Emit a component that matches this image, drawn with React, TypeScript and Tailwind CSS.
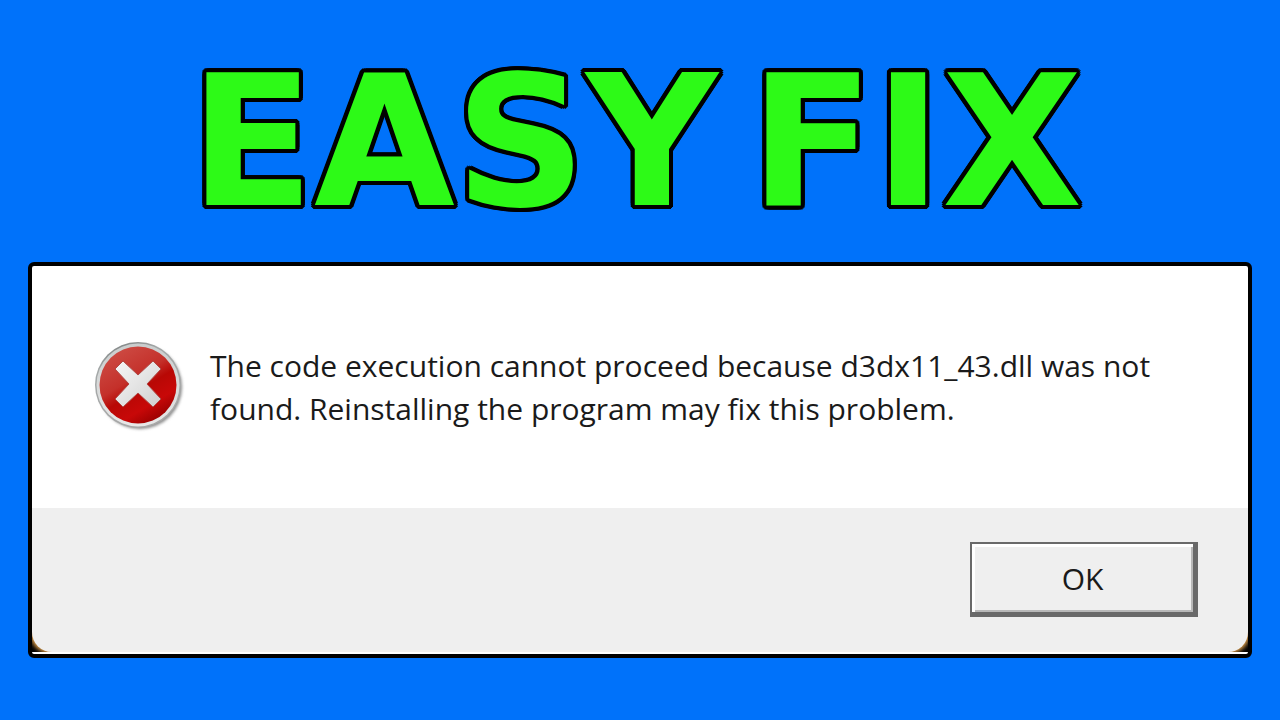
function ErrorIcon() {
  return (
    <svg viewBox="0 0 92 92" className="h-[92px] w-[92px] shrink-0" role="img" aria-label="Error">
      <defs>
        <linearGradient id="rim" x1="0" y1="0" x2="0.4" y2="1">
          <stop offset="0" stopColor="#6f7373" />
          <stop offset="0.3" stopColor="#a4a8a8" />
          <stop offset="1" stopColor="#a8a8a8" />
        </linearGradient>
        <linearGradient id="ring" x1="0" y1="0" x2="0" y2="1">
          <stop offset="0" stopColor="#c9cdcd" />
          <stop offset="1" stopColor="#e8e8e8" />
        </linearGradient>
        <linearGradient id="face" x1="0.1" y1="0" x2="0.7" y2="1">
          <stop offset="0" stopColor="#cf5149" />
          <stop offset="0.45" stopColor="#c4302a" />
          <stop offset="0.6" stopColor="#b80805" />
          <stop offset="0.8" stopColor="#c80808" />
          <stop offset="1" stopColor="#970000" />
        </linearGradient>
        <linearGradient id="cross" x1="0" y1="0" x2="1" y2="1">
          <stop offset="0" stopColor="#f6f6f6" />
          <stop offset="0.5" stopColor="#e4e4e4" />
          <stop offset="1" stopColor="#cfcfcf" />
        </linearGradient>
        <filter id="soft" x="-20%" y="-20%" width="140%" height="140%">
          <feGaussianBlur stdDeviation="1.6" />
        </filter>
      </defs>
      <circle cx="46" cy="46" r="42" fill="#8a8a8a" filter="url(#soft)" />
      <circle cx="44" cy="44" r="43" fill="url(#rim)" />
      <circle cx="44" cy="44" r="41.5" fill="url(#ring)" />
      <circle cx="44" cy="44" r="38.5" fill="url(#face)" />
      <path
        d="M29 20 L44 34 L59 20 L67 28 L53 43 L67 58 L59 66 L44 52 L29 66 L21 58 L35 43 L21 28 Z"
        fill="url(#cross)"
        stroke="#b04a46"
        strokeWidth="1"
        strokeLinejoin="round"
      />
    </svg>
  );
}

export default function App() {
  return (
    <main className="flex min-h-screen flex-col bg-[#0072fa] px-7 pt-9 pb-[62px] font-['Open_Sans','Noto_Sans',sans-serif]">
      <h1 className="flex justify-center gap-8 pr-2 pb-[14px] font-['DejaVu_Sans',sans-serif] text-[182px] leading-[212px] font-bold whitespace-nowrap text-[#2dfa17] [text-shadow:4px_0_#000,4px_2px_#000,3px_3px_#000,2px_4px_#000,0_4px_#000,-2px_4px_#000,-3px_3px_#000,-4px_2px_#000,-4px_0_#000,-4px_-2px_#000,-3px_-3px_#000,-2px_-4px_#000,0_-4px_#000,2px_-4px_#000,3px_-3px_#000,4px_-2px_#000]">
        <span>EASY</span> <span>FIX</span>
      </h1>

      <section
        role="alertdialog"
        aria-labelledby="message"
        className="flex grow flex-col overflow-hidden rounded-md border-4 border-black bg-white"
      >
        <div className="flex grow items-center gap-6 px-[62px]">
          <ErrorIcon />
          <p id="message" className="max-w-[960px] text-[30px] leading-[43px] text-[#1a1a1a]">
            The code execution cannot proceed because d3dx11_43.dll was not
            found. Reinstalling the program may fix this problem.
          </p>
        </div>

        {/* Button bar, the dark backdrop shows through its rounded corners */}
        <div className="mb-[2px] overflow-hidden bg-black">
          <footer className="flex justify-end rounded-b-[20px] bg-[#efefef] px-[50px] pt-[34px] pb-[35px] shadow-[0_0_4px_2px_#e8a650]">
            <button
              type="button"
              className="h-[75px] w-[228px] border-t-2 border-r-[5px] border-b-[5px] border-l-2 border-[#696969] bg-[#efefef] text-[30px] text-[#1a1a1a] shadow-[inset_3px_3px_0_#ffffff,inset_-2px_-2px_0_#b8b8b8]"
            >
              OK
            </button>
          </footer>
        </div>
      </section>
    </main>
  );
}
